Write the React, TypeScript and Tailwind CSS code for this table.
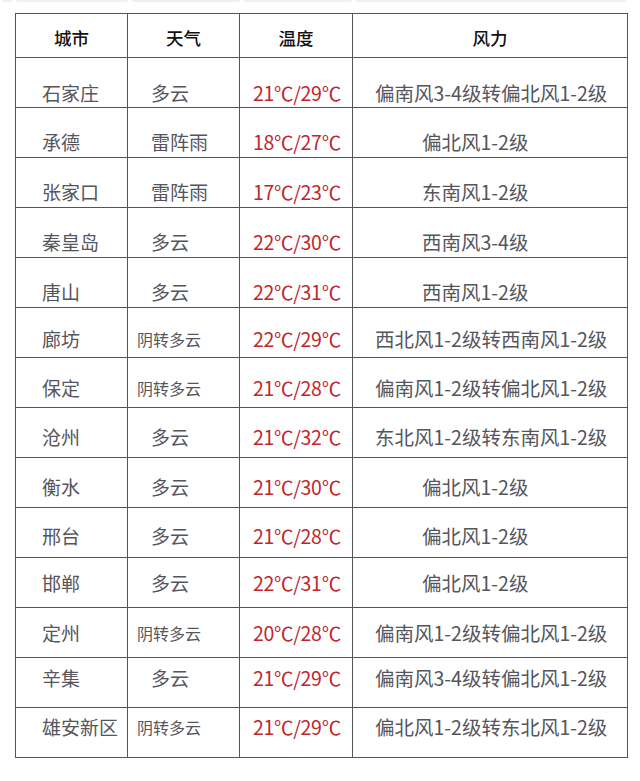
import React from "react";

type Row = {
  city: string;
  weather: string;
  temp: string;
  wind: string;
  off: string;
};

const rows: Row[] = [
  { city: "石家庄", weather: "多云", temp: "21℃/29℃", wind: "偏南风3-4级转偏北风1-2级", off: "pt-[20px]" },
  { city: "承德", weather: "雷阵雨", temp: "18℃/27℃", wind: "偏北风1-2级", off: "pt-[18px]" },
  { city: "张家口", weather: "雷阵雨", temp: "17℃/23℃", wind: "东南风1-2级", off: "pt-[18px]" },
  { city: "秦皇岛", weather: "多云", temp: "22℃/30℃", wind: "西南风3-4级", off: "pt-[18px]" },
  { city: "唐山", weather: "多云", temp: "22℃/31℃", wind: "西南风1-2级", off: "pt-[18px]" },
  { city: "廊坊", weather: "阴转多云", temp: "22℃/29℃", wind: "西北风1-2级转西南风1-2级", off: "pt-[12px]" },
  { city: "保定", weather: "阴转多云", temp: "21℃/28℃", wind: "偏南风1-2级转偏北风1-2级", off: "pt-[10px]" },
  { city: "沧州", weather: "多云", temp: "21℃/32℃", wind: "东北风1-2级转东南风1-2级", off: "pt-[8px]" },
  { city: "衡水", weather: "多云", temp: "21℃/30℃", wind: "偏北风1-2级", off: "pt-[8px]" },
  { city: "邢台", weather: "多云", temp: "21℃/28℃", wind: "偏北风1-2级", off: "pt-[6px]" },
  { city: "邯郸", weather: "多云", temp: "22℃/31℃", wind: "偏北风1-2级", off: "pt-0" },
  { city: "定州", weather: "阴转多云", temp: "20℃/28℃", wind: "偏南风1-2级转偏北风1-2级", off: "pt-0" },
  { city: "辛集", weather: "多云", temp: "21℃/29℃", wind: "偏南风3-4级转偏北风1-2级", off: "pb-[10px]" },
  { city: "雄安新区", weather: "阴转多云", temp: "21℃/29℃", wind: "偏北风1-2级转东北风1-2级", off: "pb-[12px]" },
];

const font = { fontFamily: '"Noto Sans CJK SC", "Noto Sans", sans-serif' };

export default function App() {
  return (
    <div className="w-[640px] h-[781px] bg-white relative overflow-hidden" style={font}>
      <div className="flex h-[2px] gap-[4px] px-[2px]">
        <div className="w-[10px] bg-[#f0f0f0] rounded-b" />
        <div className="w-[112px] bg-[#f0f0f0] rounded-b" />
        <div className="w-[108px] bg-[#eef0f0] rounded-b" />
        <div className="w-[108px] bg-[#f0f0f0] rounded-b" />
        <div className="w-[270px] bg-[#f0f0f0] rounded-b" />
      </div>
      <div className="pt-[11px] pl-[15px]">
        <table className="table-fixed border-collapse w-[612px] border-[1.5px] border-[#555]">
          <colgroup>
            <col className="w-[112px]" />
            <col className="w-[112px]" />
            <col className="w-[113px]" />
            <col className="w-[275px]" />
          </colgroup>
          <thead>
            <tr>
              {["城市", "天气", "温度", "风力"].map((h) => (
                <th key={h} className="border border-[#555] p-0">
                  <div className="flex items-center justify-center h-[43px] pt-[5px] text-[17.5px] font-medium text-[#111] leading-none">
                    {h}
                  </div>
                </th>
              ))}
            </tr>
          </thead>
          <tbody>
            {rows.map((r) => {
              const longWind = r.wind.length > 8;
              const longWeather = r.weather.length > 3;
              return (
                <tr key={r.city}>
                  <td className="border border-[#555] p-0">
                    <div className={`flex items-center h-[49px] pl-[26px] text-[19px] text-[#55555c] leading-none ${r.off}`}>
                      {r.city}
                    </div>
                  </td>
                  <td className="border border-[#555] p-0">
                    <div
                      className={`flex items-center h-[49px] leading-none text-[#55555c] ${r.off} ${
                        longWeather ? "pl-[9px] text-[16px]" : "pl-[23px] text-[19px]"
                      }`}
                    >
                      {r.weather}
                    </div>
                  </td>
                  <td className="border border-[#555] p-0">
                    <div className={`flex items-center h-[49px] pl-[13px] text-[19.5px] text-[#c0272d] leading-none tracking-[-0.3px] ${r.off}`}>
                      {r.temp}
                    </div>
                  </td>
                  <td className="border border-[#555] p-0">
                    <div
                      className={`flex items-center h-[49px] text-[19.5px] text-[#55555c] leading-none whitespace-nowrap ${r.off} ${
                        longWind ? "pl-[22px]" : "pl-[69px]"
                      }`}
                    >
                      {r.wind}
                    </div>
                  </td>
                </tr>
              );
            })}
          </tbody>
        </table>
      </div>
    </div>
  );
}
